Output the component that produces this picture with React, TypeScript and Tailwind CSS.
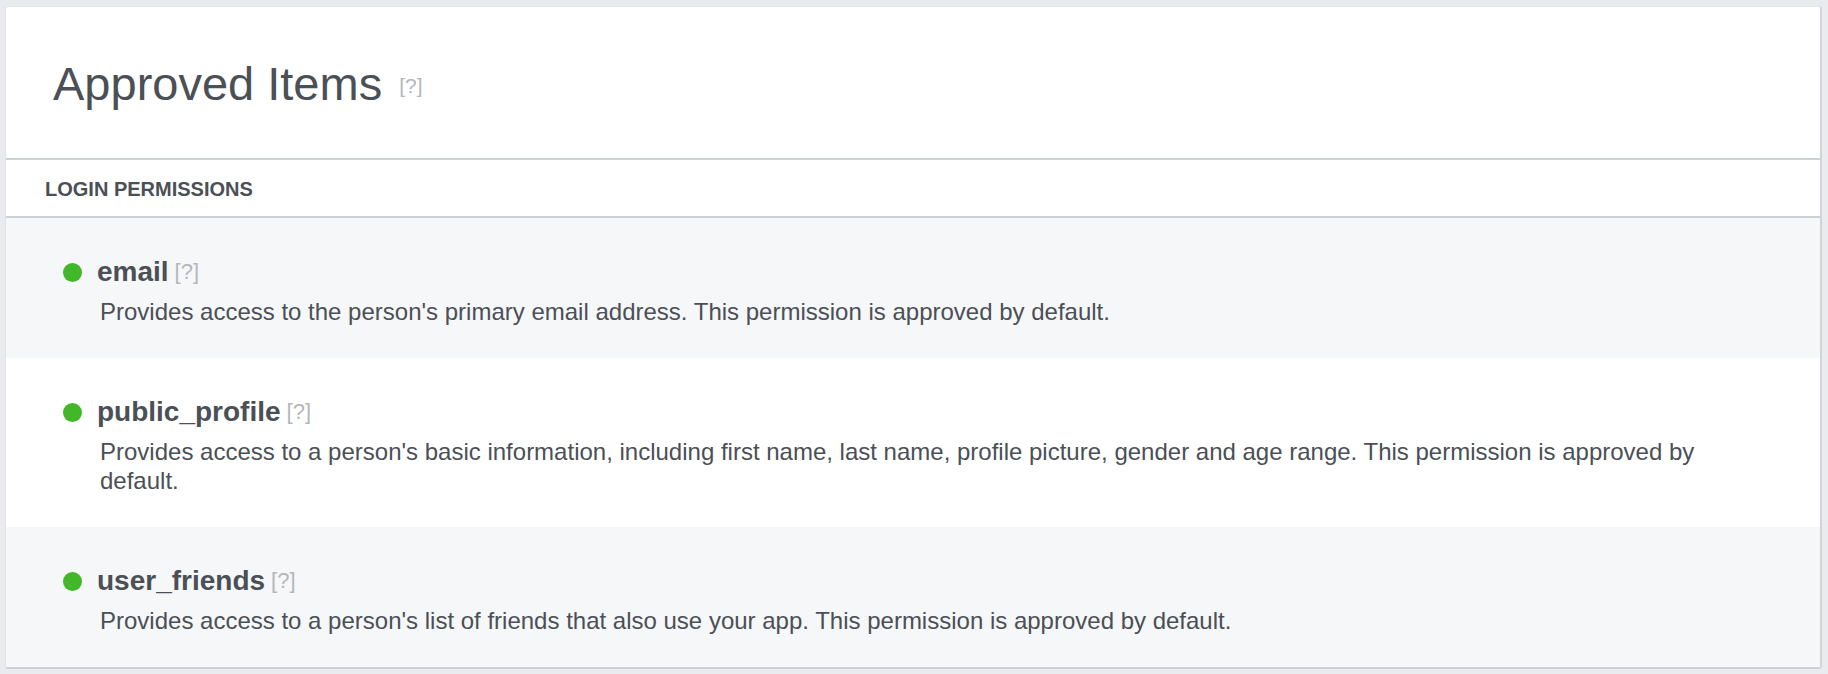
import React from 'react';

interface Permission {
  name: string;
  description: string;
}

const permissions: Permission[] = [
  {
    name: 'email',
    description: "Provides access to the person's primary email address. This permission is approved by default.",
  },
  {
    name: 'public_profile',
    description:
      "Provides access to a person's basic information, including first name, last name, profile picture, gender and age range. This permission is approved by default.",
  },
  {
    name: 'user_friends',
    description: "Provides access to a person's list of friends that also use your app. This permission is approved by default.",
  },
];

const HelpLink = ({ className }: { className: string }) => (
  <span className={`font-normal text-[#b4b7bc] ${className}`}>[?]</span>
);

const PermissionRow = ({ item, shaded }: { item: Permission; shaded: boolean }) => (
  <div className={`flex pl-[57px] pr-[60px] pt-[37px] pb-[32px] ${shaded ? 'bg-[#f6f7f9]' : 'bg-white'}`}>
    <div className="flex h-[34px] w-[34px] shrink-0 items-center">
      <span className="block h-[19px] w-[19px] rounded-full bg-[#42b72a]" />
    </div>
    <div className="min-w-0 flex-1">
      <div className="flex h-[34px] items-center">
        <span className="text-[28px] font-bold leading-[34px]">{item.name}</span>
        <HelpLink className="ml-[6px] text-[22px] leading-[34px]" />
      </div>
      <p className="mt-[8px] pl-[3px] text-[24px] leading-[29px]">{item.description}</p>
    </div>
  </div>
);

export default function App() {
  return (
    <div
      className="min-h-[674px] bg-[#e9ebee] pl-[5px] pr-[6px] pt-[6px] text-[#4b4f56]"
      style={{ fontFamily: '"Liberation Sans", Arial, sans-serif' }}
    >
      <div className="overflow-hidden rounded-[3px] border-l border-t border-r-2 border-b-2 border-l-[#e2e3e6] border-t-[#e5e6e9] border-r-[#d3d4d8] border-b-[#d0d1d5] bg-white">
        {/* Header */}
        <div className="flex items-center pl-[47px] pt-[49px] pb-[46px]">
          <h1 className="text-[47px] font-normal leading-[56px]">Approved Items</h1>
          <HelpLink className="ml-[17px] mt-[3px] text-[21px] leading-[24px]" />
        </div>

        {/* Section label */}
        <div className="border-y-2 border-[#cdd0d4] pl-[39px] pt-[17px] pb-[15px]">
          <h2 className="text-[20px] font-bold leading-[24px]">LOGIN PERMISSIONS</h2>
        </div>

        {permissions.map((item, i) => (
          <PermissionRow key={item.name} item={item} shaded={i % 2 === 0} />
        ))}
      </div>
    </div>
  );
}
